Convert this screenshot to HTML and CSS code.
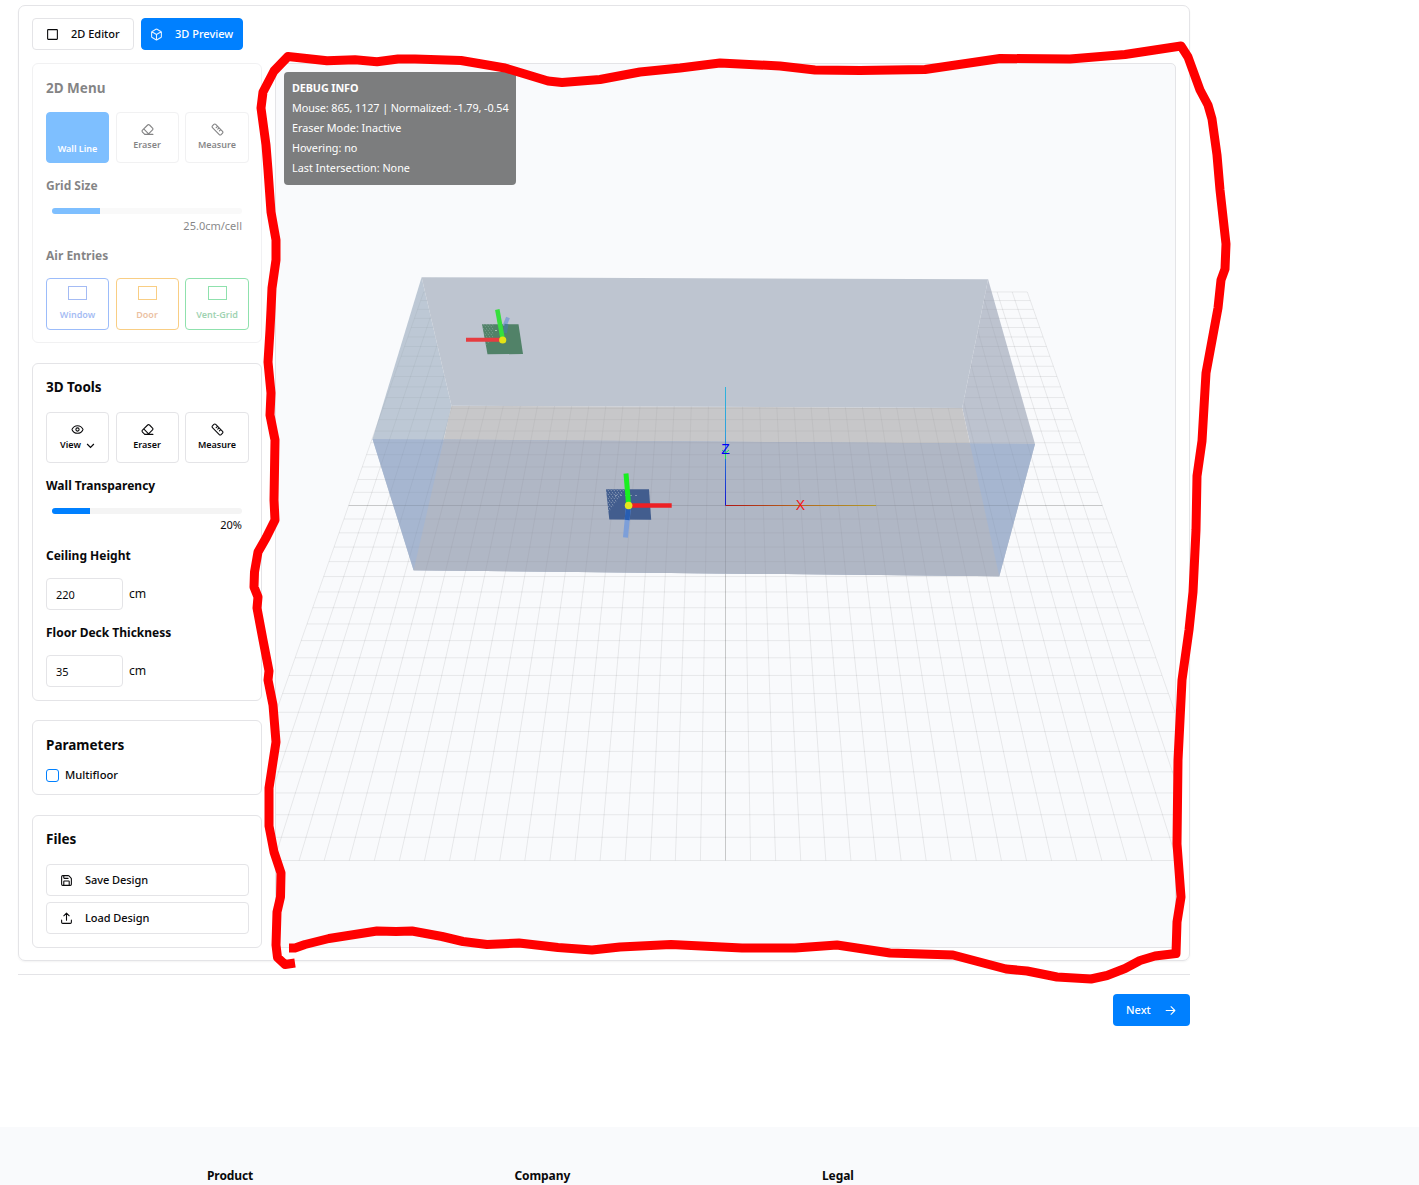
FILE: index.html
```html
<!DOCTYPE html>
<html lang="en">
<head>
<meta charset="utf-8">
<title>3D Preview</title>
<link rel="stylesheet" href="styles.css">
</head>
<body>
<svg class="defs" width="0" height="0">
  <symbol id="eraser" viewBox="0 0 24 24"><path d="m7 21-4.3-4.3c-1-1-1-2.5 0-3.4l9.6-9.6c1-1 2.5-1 3.4 0l5.6 5.6c1 1 1 2.5 0 3.4L13 21M22 21H7M5 11l9 9"/></symbol>
  <symbol id="ruler" viewBox="0 0 24 24"><path d="M8.7 2.7 21.3 15.3a2.4 2.4 0 0 1 0 3.4l-2.6 2.6a2.4 2.4 0 0 1-3.4 0L2.7 8.7a2.4 2.4 0 0 1 0-3.4l2.6-2.6a2.4 2.4 0 0 1 3.4 0ZM14.5 9.500l-2 2M11.500 6.500l-2 2M17.500 12.500l-2 2"/></symbol>
</svg>
<main class="page">
  <section class="panel">
    <nav class="tabs">
      <button class="tab"><svg class="icon" viewBox="0 0 24 24"><rect x="3" y="3" width="18" height="18" rx="1"/></svg><span>2D Editor</span></button>
      <button class="tab tab-active"><svg class="icon" viewBox="0 0 24 24"><path d="M21 8a2 2 0 0 0-1-1.700l-7-4a2 2 0 0 0-2 0l-7 4A2 2 0 0 0 3 8v8a2 2 0 0 0 1 1.700l7 4a2 2 0 0 0 2 0l7-4a2 2 0 0 0 1-1.700ZM3.300 7l8.700 5 8.700-5M12 22V12"/></svg><span>3D Preview</span></button>
    </nav>
    <div class="workspace">
      <aside class="sidebar">
        <section class="card card-2d">
          <h2 class="title">2D Menu</h2>
          <div class="tools">
            <button class="tool tool-on"><span>Wall Line</span></button>
            <button class="tool"><svg class="icon"><use href="#eraser"/></svg><span>Eraser</span></button>
            <button class="tool"><svg class="icon"><use href="#ruler"/></svg><span>Measure</span></button>
          </div>
          <h3 class="label">Grid Size</h3>
          <div class="slider"><div class="fill" style="width:25.3%"></div></div>
          <p class="value">25.0cm/cell</p>
          <h3 class="label label-after">Air Entries</h3>
          <div class="tools entries">
            <button class="tool window"><i class="swatch"></i><span>Window</span></button>
            <button class="tool door"><i class="swatch"></i><span>Door</span></button>
            <button class="tool vent"><i class="swatch"></i><span>Vent-Grid</span></button>
          </div>
        </section>
        <section class="card card-3d">
          <h2 class="title title-short">3D Tools</h2>
          <div class="tools">
            <button class="tool"><svg class="icon" viewBox="0 0 24 24"><path d="M2 12.300a1 1 0 0 1 0-.7C4 7.500 7.600 5 12 5s8 2.500 10 6.600a1 1 0 0 1 0 .7C20 16.500 16.400 19 12 19s-8-2.500-10-6.700Z"/><circle cx="12" cy="12" r="3"/></svg><span class="view">View <svg class="chevron" viewBox="0 0 24 24"><path d="m3 8 9 9 9-9"/></svg></span></button>
            <button class="tool"><svg class="icon"><use href="#eraser"/></svg><span>Eraser</span></button>
            <button class="tool"><svg class="icon"><use href="#ruler"/></svg><span>Measure</span></button>
          </div>
          <h3 class="label">Wall Transparency</h3>
          <div class="slider"><div class="fill" style="width:20%"></div></div>
          <p class="value value-tight">20%</p>
          <h3 class="label">Ceiling Height</h3>
          <div class="field"><input class="input" value="220"><span>cm</span></div>
          <h3 class="label">Floor Deck Thickness</h3>
          <div class="field"><input class="input" value="35"><span>cm</span></div>
        </section>
        <section class="card card-params">
          <h2 class="title">Parameters</h2>
          <label class="check"><i class="box"></i><span>Multifloor</span></label>
        </section>
        <section class="card card-files">
          <h2 class="title title-short">Files</h2>
          <div class="files">
            <button class="file"><svg class="icon" viewBox="0 0 24 24"><path d="M15.200 3a2 2 0 0 1 1.400.6l3.800 3.800a2 2 0 0 1 .6 1.400V19a2 2 0 0 1-2 2H5a2 2 0 0 1-2-2V5a2 2 0 0 1 2-2ZM17 21v-7a1 1 0 0 0-1-1H8a1 1 0 0 0-1 1v7M7 3v4a1 1 0 0 0 1 1h7"/></svg><span>Save Design</span></button>
            <button class="file"><svg class="icon" viewBox="0 0 24 24"><path d="M21 15v4a2 2 0 0 1-2 2H5a2 2 0 0 1-2-2v-4M17 7l-5-5-5 5M12 2v13"/></svg><span>Load Design</span></button>
          </div>
        </section>
      </aside>
      <section class="viewer">
        <svg class="scene" viewBox="276 64 899 883">
          <defs>
            <linearGradient id="axis-x" gradientUnits="userSpaceOnUse" x1="725" y1="0" x2="876" y2="0"><stop offset="0" stop-color="#b01414"/><stop offset=".5" stop-color="#b36a1c"/><stop offset="1" stop-color="#b0982a"/></linearGradient>
            <linearGradient id="axis-z" gradientUnits="userSpaceOnUse" x1="0" y1="387" x2="0" y2="505"><stop offset="0" stop-color="#2fb4dc"/><stop offset=".4" stop-color="#2da0dc"/><stop offset="1" stop-color="#1414d0"/></linearGradient>
            <pattern id="speckle" width="3" height="4" patternUnits="userSpaceOnUse"><path d="M0 0l1 1.500M2 2l.7 1.200" stroke="#c3cbd6" stroke-width=".8"/></pattern>
            <clipPath id="room"><polygon points="421.600,277.300 988.100,279.300 1035,444 999.300,576.300 413.600,570.300 372.500,439"/></clipPath>
            <g id="floor-grid"><path id="grid-lines" class="grid-lines"/><path id="grid-center" class="grid-center"/></g>
          </defs>
          <use href="#floor-grid"/>
          <polygon points="421.600,277.300 372.500,439 413.600,570.300 451.500,405.700" fill="#bdc8d5"/>
          <polygon points="988.100,279.300 1035,444 999.300,576.300 962.200,408" fill="#bdc3cf"/>
          <polygon points="451.500,405.700 962.200,408 999.300,576.300 413.600,570.300" fill="#c7c7c9"/>
          <polygon points="372.500,439 1035,444 999.300,576.300 413.600,570.300" fill="#a6b6d0"/>
          <polygon points="443.800,439.500 969.900,443.500 999.300,576.300 413.600,570.300" fill="#b0b7c5"/>
          <g clip-path="url(#room)"><use class="grid-inside" href="#floor-grid"/></g>
          <polygon points="421.600,277.300 988.100,279.300 962.200,408 451.500,405.700" fill="#bec5d0"/>
          <g stroke-linecap="butt">
            <polygon points="482,324.300 518.500,324.300 523,354 487.500,354.300" fill="#518268"/>
            <polygon points="482,324.300 494,324.300 493,340 486,345" fill="url(#speckle)" opacity=".4"/>
            <path d="M495 330.500h15" stroke="#a5bcb0" stroke-dasharray="2 3"/>
            <path d="M504.500 326l3.500-8.500" stroke="#88a2d2" stroke-width="4"/>
            <path d="M505 333l1.500-9" stroke="#4a7f91" stroke-width="4"/>
            <path d="M466 339.800h35" stroke="#e63c40" stroke-width="4"/>
            <path d="M502.500 338l-5.200-28.500" stroke="#36df3c" stroke-width="4.500"/>
            <circle cx="502.700" cy="340" r="3.600" fill="#e3e316"/>
            <polygon points="606,489.300 649,489.300 651.200,519.800 609.300,519.500" fill="#425d8e"/>
            <polygon points="606,489.300 626,489.300 610,511 608,511" fill="url(#speckle)" opacity=".65"/>
            <path d="M615 495.500h24" stroke="#8494b2" stroke-dasharray="2 3"/>
            <path d="M628.500 506l-3 31.500" stroke="#7d9fd9" stroke-width="5"/>
            <path d="M628.500 506l-1.400 14" stroke="#285eb2" stroke-width="5"/>
            <path d="M630 505.500h41.700" stroke="#ed2024" stroke-width="4.500"/>
            <path d="M628.500 504l-2.500-30.500" stroke="#18ef20" stroke-width="5"/>
            <circle cx="628.600" cy="505.500" r="3.800" fill="#e6e61e"/>
          </g>
          <path d="M725.500 505.500H876" stroke="url(#axis-x)"/>
          <path d="M725 387h1v118.500h-1z" fill="url(#axis-z)"/>
          <path d="M722 450l3.500 3 3.500-3M725.500 453v6" stroke="#18e84c" fill="none"/>
          <text class="axis-label" x="725.500" y="453.700" fill="#0000f5">Z</text>
          <text class="axis-label" x="800.500" y="509.500" fill="#f51414">X</text>
        </svg>
        <div class="debug">
          <strong>DEBUG INFO</strong>
          <span class="mouse">Mouse: 865, 1127 | Normalized: -1.79, -0.54</span>
          <span>Eraser Mode: Inactive</span>
          <span>Hovering: no</span>
          <span>Last Intersection: None</span>
        </div>
      </section>
    </div>
  </section>
  <div class="actions"><button class="next"><span>Next</span><svg class="icon" viewBox="0 0 24 24"><path d="M4 12h16M13 5l7 7-7 7"/></svg></button></div>
</main>
<footer class="footer"><h4 class="col">Product</h4><h4 class="col">Company</h4><h4 class="col">Legal</h4></footer>
<svg class="markup" viewBox="0 0 1419 1185"><path d="M295 963L285 964.500L277.500 957.500L276 945L277 912L280.500 897L281 873L274 852L269 826L269 788L276 742L273 705L268 680L269 671L263 640L257 608L258 597L254 587L254.500 572L258 552L266 538L275 520L274 500L275 440L270 415L271 393L268 362L270 330L271 310L272 288L276 260L276 240L271 212L268 170L266 145L261 108L263 92L274 71L288 56.500L327 60.700L355 59.700L377 61.700L398 59L415 59L461 60.500L505 68L548 81L562 82.500L600 79.500L640 72L680 68L720 63L780 66L815 70L860 70.500L925 69.500L1000 58.500L1070 59L1125 54.500L1181 46L1188 57L1200 90L1208 105L1212 119L1217 155L1220 190L1226 244L1225 269L1221 280L1218 308L1206 373L1202 441L1197 476L1196 530L1193 592L1189 630L1182 680L1178 760L1177 844L1181 897L1177 922L1176 953.500L1155 956L1140 960.500L1125 968.500L1107 975.500L1091 979L1057 977L1027 971L1006 969L953 955L890 953L837 945L795 948L742 948L671 944.600L620 947L592 950L558 947.500L519 943L487 944.500L463 941.500L442 936.500L412 931L396 931.500L377 931L329 938.500L305 944.500L295 948L289 948"/></svg>
<script src="grid.js"></script>
</body>
</html>
```
FILE: styles.css
```css
* { box-sizing: border-box; }
body { margin: 0; height: 1185px; overflow: hidden; position: relative; background: #fff; color: #09090b; font-family: "Noto Sans", "Open Sans", sans-serif; font-size: 11px; }
h2, h3, h4, p { margin: 0; }
button { font: inherit; color: inherit; background: #fff; border: 1px solid #e4e4e7; border-radius: 4px; padding: 0; }
.defs { position: absolute; }
.page { height: 1127px; padding: 5px 0 0 18px; width: 1190px; }
.panel { height: 956px; border: 1px solid #e4e4e7; border-radius: 7px; padding: 12px 13px; box-shadow: 0 1px 2px rgba(0,0,0,.05); }
.icon { width: 13px; height: 13px; fill: none; stroke: currentColor; stroke-width: 2; stroke-linecap: round; stroke-linejoin: round; flex: none; }
.tabs { display: flex; gap: 7px; height: 32px; margin-bottom: 13px; }
.tab { width: 102px; display: flex; align-items: center; padding: 0 0 0 13px; gap: 12px; font-weight: 500; font-size: 11px; white-space: nowrap; }
.tab span, .file span, .next span, .check span { padding-bottom: 2px; }
.tab-active { background: #0080ff; border-color: #0080ff; color: #fff; padding-left: 8px; }
.tab-active .icon { opacity: .9; }
.workspace { display: grid; grid-template-columns: 230px 901px; gap: 13px; height: 885px; }
.sidebar { display: flex; flex-direction: column; }
.card { border: 1px solid #e4e4e7; border-radius: 6px; padding: 12px 12px 0 13px; }
.card-2d { height: 280px; margin-bottom: 20px; opacity: .5; }
.card-3d { height: 338px; margin-bottom: 19px; }
.card-params { height: 75px; margin-bottom: 20px; }
.card-files { height: 133px; }
.title { height: 24px; line-height: 24px; font-size: 13.500px; font-weight: 700; margin-bottom: 12px; }
.title-short { height: 22px; line-height: 22px; margin-bottom: 14px; }
.tools { display: grid; grid-template-columns: 63px 63px 64px; column-gap: 6.500px; height: 51px; }
.entries { height: 52px; }
.tool { display: flex; flex-direction: column; align-items: center; padding-top: 10px; gap: 2px; font-size: 9px; line-height: 14px; font-weight: 600; }
.tool span { white-space: nowrap; }
.tool-on { background: #0080ff; border-color: #0080ff; color: #fff; padding-top: 29px; }
.view { display: flex; align-items: center; gap: 5px; }
.chevron { width: 9px; height: 9px; fill: none; stroke: currentColor; stroke-width: 3.200; }
.swatch { width: 19px; height: 14px; border: 1px solid currentColor; margin-bottom: 6px; }
.entries .tool { padding-top: 7px; }
.window { border-color: #3b7bf6; color: #4c7aea; }
.door { border-color: #f59e0b; color: #d98445; }
.door .swatch { border-color: #f59e0b; }
.vent { border-color: #22c55e; color: #3fa866; }
.vent .swatch { border-color: #22c55e; }
.label { height: 21px; line-height: 21px; margin: 12px 0; font-size: 12px; font-weight: 700; }
.label-after { margin-top: 11px; }
.slider { height: 6px; margin: 0 7px 0 6px; border-radius: 3px; background: #f4f4f4; overflow: hidden; }
.fill { height: 6px; background: #0080ff; }
.value { height: 16px; line-height: 16px; margin: 4px 7px 0 0; text-align: right; font-size: 11px; }
.value-tight { margin-top: 3px; }
.field { display: flex; align-items: center; gap: 6px; height: 32px; font-size: 12.200px; }
.field span { padding-bottom: 1px; }
.input { width: 77px; height: 32px; padding: 0 9px; border: 1px solid #e4e4e7; border-radius: 4px; font: inherit; font-size: 11px; color: inherit; }
.check { display: flex; align-items: center; gap: 6px; height: 14px; margin-top: -1px; font-weight: 500; font-size: 11.200px; }
.box { width: 13px; height: 13px; border: 1px solid #0080ff; border-radius: 3px; }
.files { display: grid; gap: 6px; }
.file { height: 32px; display: flex; align-items: center; gap: 12px; padding-left: 13px; font-weight: 500; font-size: 11px; letter-spacing: -.05px; }
.viewer { position: relative; border: 1px solid #e4e4e7; border-radius: 5px; background: #f9fafc; overflow: hidden; }
.scene { display: block; width: 899px; height: 883px; }
.grid-lines { fill: none; stroke: #000; stroke-opacity: .075; }
.grid-center { fill: none; stroke: #000; stroke-opacity: .2; }
.grid-inside { opacity: .5; }
.axis-label { font: 14px "Liberation Sans", sans-serif; text-anchor: middle; }
.debug { position: absolute; left: 8px; top: 8px; width: 232px; height: 113px; padding: 6px 8px; border-radius: 4px; background: #7c7d7e; color: #fff; font-size: 10.800px; line-height: 20px; white-space: nowrap; display: flex; flex-direction: column; }
.debug strong { font-weight: 700; letter-spacing: -.1px; }
.mouse { letter-spacing: -.09px; }
.actions { margin-top: 13px; border-top: 1px solid #e4e4e7; padding-top: 19px; display: flex; justify-content: flex-end; }
.next { width: 77px; height: 32px; background: #0080ff; border: 0; color: #fff; display: flex; align-items: center; justify-content: space-between; padding: 0 13px; font-weight: 500; font-size: 11px; }
.footer { height: 58px; background: #f9fafc; padding: 38px 0 0 207px; display: grid; grid-template-columns: 307.500px 307.500px 307.500px; }
.col { font-size: 12px; line-height: 21px; font-weight: 700; letter-spacing: -.1px; }
.markup { position: absolute; left: 0; top: 0; width: 1419px; height: 1185px; pointer-events: none; }
.markup path { fill: none; stroke: #f00; stroke-width: 9; stroke-linejoin: round; }
```
FILE: grid.js
```js
// Perspective floor grid: 40 x 40 cells seen by a camera above the near edge.
const CX = 725.5, HORIZON = -566.6, DEPTH = 80.4, SCALE = 1072.1 * DEPTH, HALF = 20;
const rowY = (k) => HORIZON + SCALE / (DEPTH + k);
const cellX = (i, y) => CX + i * (y - HORIZON) * 0.3515 / HALF;
const line = (x1, y1, x2, y2) =>
  `M${x1.toFixed(2)} ${y1.toFixed(2)}L${x2.toFixed(2)} ${y2.toFixed(2)}`;

let lines = "", center = "";
for (let k = -HALF; k <= HALF; k++) {
  const y = rowY(k), back = rowY(HALF), front = rowY(-HALF);
  const row = line(cellX(-HALF, y), y, cellX(HALF, y), y);
  const column = line(cellX(k, back), back, cellX(k, front), front);
  if (k === 0) center += row + column;
  else lines += row + column;
}
document.getElementById("grid-lines").setAttribute("d", lines);
document.getElementById("grid-center").setAttribute("d", center);
```
